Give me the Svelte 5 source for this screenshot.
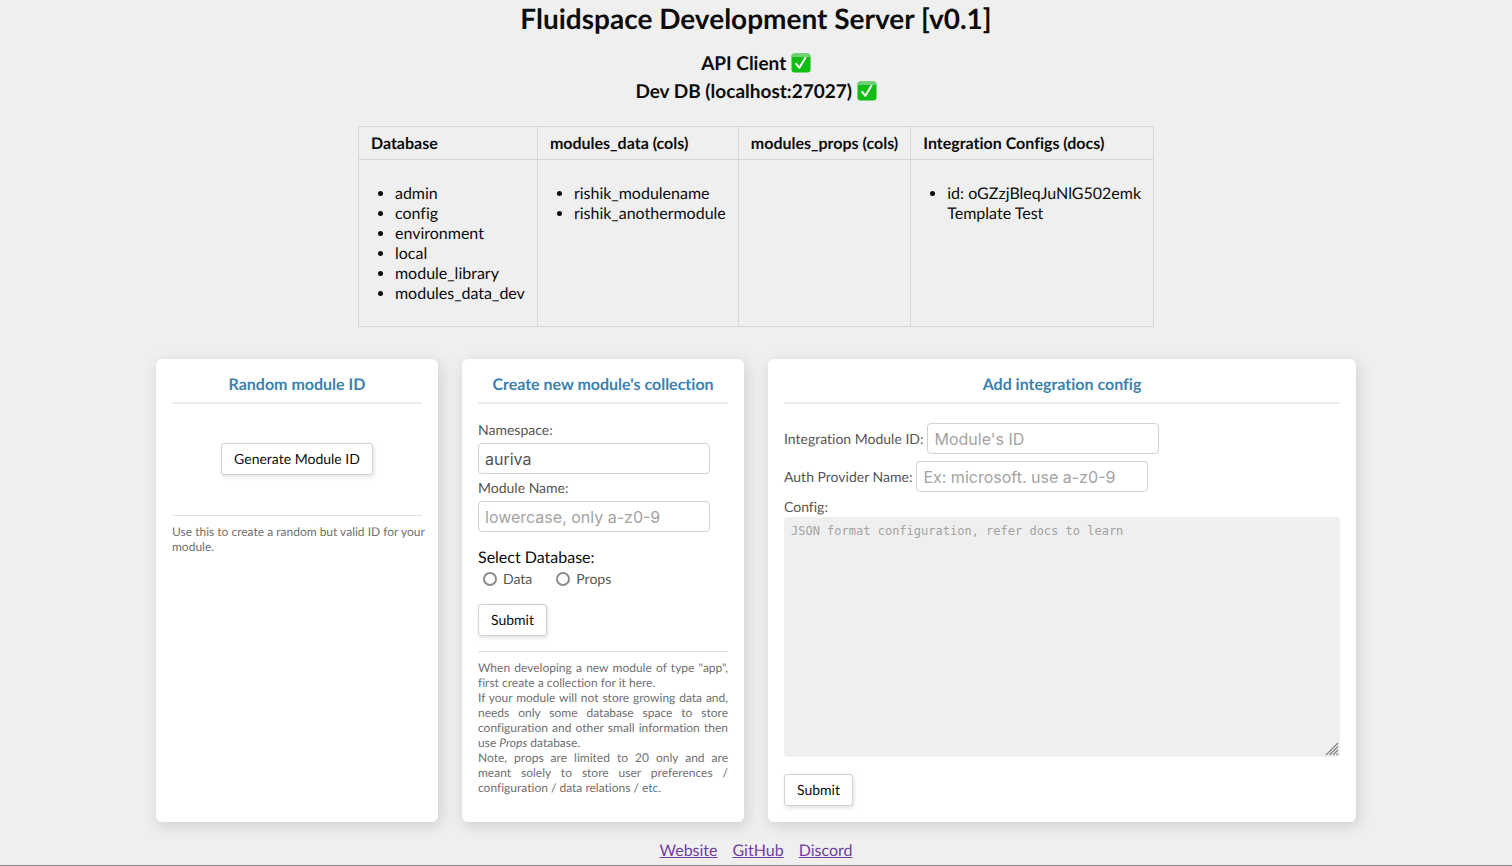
<script>
  const columns = [
    { title: 'Database', items: [['admin'], ['config'], ['environment'], ['local'], ['module_library'], ['modules_data_dev']] },
    { title: 'modules_data (cols)', items: [['rishik_modulename'], ['rishik_anothermodule']] },
    { title: 'modules_props (cols)', items: [] },
    { title: 'Integration Configs (docs)', items: [['id: oGZzjBleqJuNlG502emk', 'Template Test']] }
  ];
  let namespace = $state('auriva');
  let moduleName = $state('');
  let database = $state('');
  let integrationId = $state('');
  let provider = $state('');
  let config = $state('');
  const stop = (e) => e.preventDefault();
</script>

{#snippet check()}
  <svg class="check" viewBox="0 0 20 20" role="img" aria-label="connected">
    <rect x="0.5" y="0.5" width="19" height="19" rx="3" fill="#0fbd14" />
    <path d="M0.5 4V3.5a3 3 0 0 1 3-3h13a3 3 0 0 1 3 3v0.5z" fill="#6fd173" />
    <path d="M5.2 10.8L8.4 14.8L14.4 4.8" fill="none" stroke="#fff" stroke-width="2" stroke-linecap="round" stroke-linejoin="round" />
  </svg>
{/snippet}

<div class="page">
  <header>
    <h1>Fluidspace Development Server [v0.1]</h1>
    <h2>API Client {@render check()}</h2>
    <h2>Dev DB (localhost:27027) {@render check()}</h2>
  </header>

  <table>
    <thead>
      <tr>
        {#each columns as col}<th scope="col">{col.title}</th>{/each}
      </tr>
    </thead>
    <tbody>
      <tr>
        {#each columns as col}
          <td>
            <ul>
              {#each col.items as lines}
                <li>{#each lines as line}<div>{line}</div>{/each}</li>
              {/each}
            </ul>
          </td>
        {/each}
      </tr>
    </tbody>
  </table>

  <main>
    <section class="card">
      <h3>Random module ID</h3>
      <div class="generate"><button type="button">Generate Module ID</button></div>
      <p class="note plain">Use this to create a random but valid ID for your<br />module.</p>
    </section>

    <section class="card">
      <h3>Create new module's collection</h3>
      <form class="create" onsubmit={stop}>
        <label for="namespace">Namespace:</label>
        <input id="namespace" type="text" bind:value={namespace} />
        <label for="module-name">Module Name:</label>
        <input id="module-name" type="text" placeholder="lowercase, only a-z0-9" bind:value={moduleName} />
        <fieldset>
          <legend>Select Database:</legend>
          <div class="radios">
            <label><input type="radio" name="db" value="data" bind:group={database} />Data</label>
            <label><input type="radio" name="db" value="props" bind:group={database} />Props</label>
          </div>
        </fieldset>
        <button type="submit">Submit</button>
      </form>
      <p class="note">
        When developing a new module of type "app", first create a collection for it here.<br />
        If your module will not store growing data and, needs only some database space to store configuration and other small information then use <em>Props</em> database.<br />
        Note, props are limited to 20 only and are meant solely to store user preferences / configuration / data relations / etc.
      </p>
    </section>

    <section class="card wide">
      <h3>Add integration config</h3>
      <form class="integration" onsubmit={stop}>
        <div class="row">
          <label for="integration-id">Integration Module ID:</label>
          <input id="integration-id" type="text" placeholder="Module's ID" bind:value={integrationId} />
        </div>
        <div class="row">
          <label for="provider">Auth Provider Name:</label>
          <input id="provider" type="text" placeholder="Ex: microsoft. use a-z0-9" bind:value={provider} />
        </div>
        <label for="config">Config:</label>
        <div class="area">
          <textarea id="config" placeholder="JSON format configuration, refer docs to learn" bind:value={config}></textarea>
          <svg class="grip" viewBox="0 0 14 14" aria-hidden="true">
            <path d="M1 13L13 1M4.5 13L13 4.5M8 13L13 8M11.5 13L13 11.5" stroke="#808080" stroke-width="1.2" fill="none" />
          </svg>
        </div>
        <button type="submit">Submit</button>
      </form>
    </section>
  </main>

  <footer>
    <a href="#website">Website</a>
    <a href="#github">GitHub</a>
    <a href="#discord">Discord</a>
  </footer>
</div>

<style>
  :global(body) {
    background: #efefef;
  }
  .page {
    box-sizing: border-box;
    min-height: 100vh;
    border-bottom: 1px solid #858585;
    display: flex;
    flex-direction: column;
    align-items: center;
    font-family: Lato, sans-serif;
    font-size: 16px;
    line-height: 20px;
    font-variant-ligatures: no-common-ligatures;
    text-rendering: geometricPrecision;
    color: #0c0c0c;
  }
  header {
    text-align: center;
  }
  h1 {
    margin: 1px 0 15px;
    font-size: 28px;
    line-height: 34px;
  }
  h2 {
    margin: 0;
    font-size: 19px;
    line-height: 28px;
  }
  .check {
    width: 20px;
    height: 20px;
    vertical-align: -3px;
  }
  table {
    margin-top: 20px;
    border-collapse: collapse;
  }
  th,
  td {
    border: 1px solid #d6d6d6;
    padding: 7px 12px 5px;
    text-align: left;
    vertical-align: top;
  }
  td {
    padding-top: 24px;
    padding-bottom: 22px;
  }
  ul {
    margin: 0;
    padding-left: 24px;
  }
  main {
    box-sizing: border-box;
    width: 100%;
    max-width: 1200px;
    margin-top: 32px;
    display: grid;
    grid-template-columns: repeat(4, minmax(0, 1fr));
    gap: 24px;
  }
  .card {
    padding: 16px;
    background: #fff;
    border-radius: 6px;
    box-shadow: 2px 4px 16px rgba(0, 0, 0, 0.14);
  }
  .wide {
    grid-column: span 2;
  }
  h3 {
    margin: 0 0 17px;
    padding-bottom: 7px;
    border-bottom: 2px solid #ececec;
    text-align: center;
    font-size: 16px;
    line-height: 20px;
    color: #3c82ae;
  }
  form {
    display: flex;
    flex-direction: column;
    align-items: flex-start;
  }
  label {
    font-size: 14px;
    line-height: 18px;
    color: #555;
  }
  input[type='text'] {
    box-sizing: border-box;
    width: 232px;
    height: 31px;
    padding: 0 6px;
    border: 1px solid #d2d2d2;
    border-radius: 4px;
    background: #fff;
    font: 16px Inter, sans-serif;
    color: #555;
  }
  ::placeholder {
    color: #a3a3a3;
    opacity: 1;
  }
  button {
    height: 32px;
    padding: 0 12px 2px;
    border: 1px solid #d2d2d2;
    border-radius: 3px;
    background: #fff;
    box-shadow: 1px 2px 4px rgba(0, 0, 0, 0.12);
    font: 14px Lato, sans-serif;
    text-rendering: inherit;
    color: #0c0c0c;
  }
  .generate {
    padding: 22px 0 40px;
    text-align: center;
  }
  .create label {
    margin-bottom: 4px;
  }
  .create input[type='text'] {
    margin-bottom: 5px;
  }
  fieldset {
    margin: 11px 0 16px;
    padding: 0;
    border: 0;
  }
  legend {
    padding: 0;
  }
  .radios {
    display: flex;
    gap: 24px;
    padding-left: 5px;
  }
  .create .radios label {
    display: flex;
    align-items: center;
    gap: 6px;
    margin: 2px 0 0;
  }
  input[type='radio'] {
    appearance: none;
    box-sizing: border-box;
    width: 14px;
    height: 14px;
    margin: 0;
    border: 2px solid #8c8c8c;
    border-radius: 50%;
    background: #fff;
  }
  input[type='radio']:checked {
    border-width: 4px;
  }
  .note {
    margin: 0;
    padding-top: 8px;
    border-top: 1px solid #e0e0e0;
    font-size: 12px;
    line-height: 15px;
    text-align: justify;
    color: #707070;
  }
  .create {
    margin-bottom: 15px;
  }
  .plain {
    text-align: left;
    white-space: nowrap;
  }
  .integration {
    padding-top: 2px;
  }
  .integration > label {
    line-height: 15px;
    margin-bottom: 3px;
  }
  .row {
    display: flex;
    align-items: center;
    gap: 4px;
    margin-bottom: 7px;
  }
  .area {
    position: relative;
    align-self: stretch;
    margin-bottom: 17px;
  }
  textarea {
    display: block;
    box-sizing: border-box;
    width: 100%;
    height: 240px;
    padding: 7px;
    border: 0;
    border-radius: 4px;
    background: #efefef;
    font: 12px 'DejaVu Sans Mono', monospace;
    color: #555;
    resize: none;
  }
  .grip {
    position: absolute;
    right: 1px;
    bottom: 1px;
    width: 14px;
    height: 14px;
    pointer-events: none;
  }
  footer {
    display: flex;
    gap: 15px;
    margin-top: 19px;
    padding-bottom: 4px;
  }
  a {
    color: #6f3fa0;
  }
</style>
